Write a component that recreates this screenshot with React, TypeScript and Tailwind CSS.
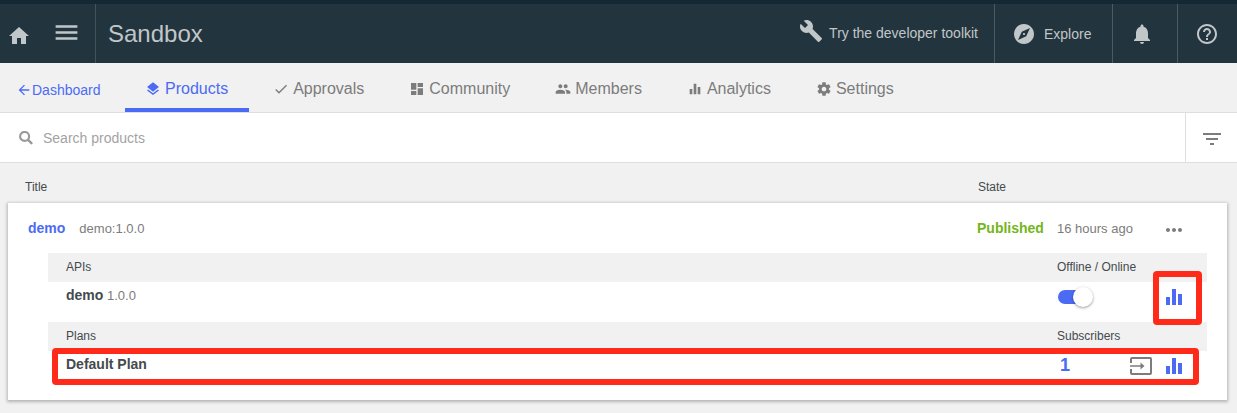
import React from "react";
import {
  MdArrowBack,
  MdBuild,
  MdCheck,
  MdDashboard,
  MdEqualizer,
  MdExplore,
  MdFilterList,
  MdHelpOutline,
  MdHome,
  MdLayers,
  MdMenu,
  MdMoreHoriz,
  MdNotifications,
} from "react-icons/md";

type IconProps = { size?: number };

function PeopleIcon({ size = 24 }: IconProps) {
  return (
    <svg viewBox="0 0 24 24" width={size} height={size} fill="currentColor" aria-hidden="true">
      <path d="M16 11c1.66 0 2.99-1.34 2.99-3S17.66 5 16 5c-1.66 0-3 1.34-3 3s1.34 3 3 3zm-8 0c1.66 0 2.99-1.34 2.99-3S9.66 5 8 5C6.34 5 5 6.34 5 8s1.34 3 3 3zm0 2c-2.33 0-7 1.17-7 3.5V19h14v-2.5c0-2.33-4.67-3.5-7-3.5zm8 0c-.29 0-.62.02-.97.05 1.16.84 1.97 1.97 1.97 3.45V19h6v-2.5c0-2.33-4.67-3.5-7-3.5z" />
    </svg>
  );
}

function GearIcon({ size = 24 }: IconProps) {
  return (
    <svg viewBox="0 0 24 24" width={size} height={size} fill="currentColor" aria-hidden="true">
      <path d="M19.43 12.98c.04-.32.07-.64.07-.98s-.03-.66-.07-.98l2.11-1.65c.19-.15.24-.42.12-.64l-2-3.46c-.12-.22-.39-.3-.61-.22l-2.49 1c-.52-.4-1.08-.73-1.69-.98l-.38-2.65C14.46 2.18 14.25 2 14 2h-4c-.25 0-.46.18-.49.42l-.38 2.65c-.61.25-1.17.59-1.69.98l-2.49-1c-.23-.09-.49 0-.61.22l-2 3.46c-.13.22-.07.49.12.64l2.11 1.65c-.04.32-.07.65-.07.98s.03.66.07.98l-2.11 1.65c-.19.15-.24.42-.12.64l2 3.46c.12.22.39.3.61.22l2.49-1c.52.4 1.08.73 1.69.98l.38 2.65c.03.24.24.42.49.42h4c.25 0 .46-.18.49-.42l.38-2.65c.61-.25 1.17-.59 1.69-.98l2.49 1c.23.09.49 0 .61-.22l2-3.46c.12-.22.07-.49-.12-.64l-2.11-1.65zM12 15.5c-1.93 0-3.5-1.57-3.5-3.5s1.57-3.5 3.5-3.5 3.5 1.57 3.5 3.5-1.57 3.5-3.5 3.5z" />
    </svg>
  );
}

function MoveInIcon() {
  return (
    <svg viewBox="0 0 24 24" width={24} height={24} fill="none" stroke="currentColor" aria-hidden="true">
      <path d="M2 9V5a1 1 0 0 1 1-1h18a1 1 0 0 1 1 1v14a1 1 0 0 1-1 1H3a1 1 0 0 1-1-1v-4" strokeWidth="2" />
      <path d="M1 12h13" strokeWidth="1.5" />
      <path d="M11.5 8.5 15.5 12l-4 3.5z" fill="currentColor" stroke="none" />
    </svg>
  );
}

function SearchIcon() {
  return (
    <svg
      viewBox="0 0 14 14"
      fill="none"
      stroke="currentColor"
      className="mr-2.5 size-3.5 text-[#999]"
      aria-hidden="true"
    >
      <circle cx="5.6" cy="5.4" r="4.5" strokeWidth="2.1" />
      <path d="M9 8.8l3.4 3.4" strokeWidth="2.4" strokeLinecap="round" />
    </svg>
  );
}

const tabs: { label: string; icon: React.ComponentType<IconProps>; active?: boolean }[] = [
  { label: "Products", icon: MdLayers, active: true },
  { label: "Approvals", icon: MdCheck },
  { label: "Community", icon: MdDashboard },
  { label: "Members", icon: PeopleIcon },
  { label: "Analytics", icon: MdEqualizer },
  { label: "Settings", icon: GearIcon },
];

function Header() {
  return (
    <header className="flex h-[63px] items-stretch border-t-4 border-[#142833] bg-[#22343e] text-[#c1c6c8]">
      <button aria-label="Home" className="flex w-[38px] items-center justify-center pt-1">
        <MdHome size={24} />
      </button>
      <button
        aria-label="Menu"
        className="flex w-[58px] items-center justify-center border-r border-[#43535c] pb-0.5"
      >
        <MdMenu size={29} />
      </button>
      <h1 className="flex items-center pl-3 text-2xl">Sandbox</h1>
      <nav className="ml-auto flex text-sm">
        <a href="#toolkit" className="flex items-center pr-4 pb-0.5">
          <MdBuild size={24} className="mr-1.5 mb-1" />
          Try the developer toolkit
        </a>
        <a
          href="#explore"
          className="flex w-[118px] items-center gap-2 border-l border-[#4b5b64] pl-[17px]"
        >
          <MdExplore size={24} />
          Explore
        </a>
        <button
          aria-label="Notifications"
          className="flex w-[65px] items-center border-l border-[#4b5b64] pl-[17px]"
        >
          <MdNotifications size={24} />
        </button>
        <button
          aria-label="Help"
          className="flex w-[60px] items-center border-l border-[#4b5b64] pl-[17px]"
        >
          <MdHelpOutline size={24} />
        </button>
      </nav>
    </header>
  );
}

function Tabs() {
  return (
    <nav className="flex h-[50px] border-b border-[#dedede] text-[#7c7c7c]">
      <a
        href="#dashboard"
        className="flex w-[125px] items-center pt-1 pl-4 text-sm text-[#4b6bf5]"
      >
        <MdArrowBack size={16} />
        Dashboard
      </a>
      <div className="flex gap-1">
        {tabs.map(({ label, icon: Icon, active }) => (
          <a
            key={label}
            href={"#" + label.toLowerCase()}
            className={
              active
                ? "flex items-center gap-1 border-b-4 border-[#4b6bf5] pt-1.5 pr-[21px] pl-5 text-base text-[#4b6bf5]"
                : "flex items-center gap-1 border-b-4 border-transparent pt-1.5 pr-[21px] pl-5 text-base"
            }
          >
            <Icon size={16} />
            {label}
          </a>
        ))}
      </div>
    </nav>
  );
}

function SearchBar() {
  return (
    <div className="flex h-[50px] border-b border-[#dedede] bg-white">
      <label className="flex flex-1 items-center pl-[19px]">
        <SearchIcon />
        <input
          type="search"
          aria-label="Search products"
          placeholder="Search products"
          className="flex-1 text-sm outline-none placeholder:text-[#a3a3a3]"
        />
      </label>
      <button
        aria-label="Filter"
        className="flex w-[52px] items-center border-l border-[#dedede] pt-0.5 pl-3.5 text-[#7c7c7c]"
      >
        <MdFilterList size={24} />
      </button>
    </div>
  );
}

function Section({
  title,
  status,
  highlight,
  children,
}: {
  title: string;
  status: string;
  highlight: string;
  children: React.ReactNode;
}) {
  return (
    <div className="relative mr-5 ml-10">
      <table className="w-full table-fixed text-left">
        <colgroup>
          <col />
          <col className="w-[72px]" />
          <col className="w-[33px]" />
          <col className="w-[45px]" />
        </colgroup>
        <thead>
          <tr className="h-[29px] bg-[#f1f1f1] text-xs">
            <th className="pb-0.5 pl-[18px] font-normal">{title}</th>
            <th colSpan={3} className="pb-0.5 font-normal">
              {status}
            </th>
          </tr>
        </thead>
        <tbody>
          <tr className="h-[29px]">{children}</tr>
        </tbody>
      </table>
      <div className={highlight} />
    </div>
  );
}

function AnalyticsButton({ label }: { label: string }) {
  return (
    <button aria-label={label} className="block text-[#4b6bf5]">
      <MdEqualizer size={24} />
    </button>
  );
}

function ProductCard() {
  return (
    <section className="mr-2.5 ml-2 bg-white pb-5 shadow-[0_1px_3px_1px_rgba(0,0,0,0.25)]">
      <div className="flex h-[50px] items-center pl-5">
        <a href="#demo" className="text-sm font-bold text-[#4b6bf5]">
          demo
        </a>
        <span className="ml-3.5 pt-0.5 text-[13px] text-[#7c7c7c]">demo:1.0.0</span>
        <div className="ml-auto flex w-[250px] items-center">
          <span className="w-20 text-sm font-bold text-[#74b51c]">Published</span>
          <span className="w-[105px] pt-0.5 text-[13px] text-[#7c7c7c]">16 hours ago</span>
          <button aria-label="More actions" className="pt-1 text-[#7c7c7c]">
            <MdMoreHoriz size={24} />
          </button>
        </div>
      </div>
      <div className="flex flex-col gap-[11px]">
        <Section
          title="APIs"
          status="Offline / Online"
          highlight="pointer-events-none absolute top-[18px] right-[5px] z-10 h-[54px] w-[49px] rounded-sm border-6 border-[#ff2a1a]"
        >
          <td className="pb-0.5 pl-[18px] text-[13px] text-[#7c7c7c]">
            <span className="text-sm font-bold text-[#444a4d]">demo</span> 1.0.0
          </td>
          <td colSpan={2}>
            <label className="flex items-center">
              <input
                type="checkbox"
                role="switch"
                defaultChecked
                aria-label="Online"
                className="ml-px flex h-3.5 w-[35px] appearance-none items-center justify-start rounded-full bg-[linear-gradient(to_right,#4b6bf5_28px,transparent_28px)] before:block before:size-5 before:shrink-0 before:rounded-full before:bg-white before:shadow-[0_1px_3px_rgba(0,0,0,0.4)] checked:justify-end"
              />
            </label>
          </td>
          <td>
            <AnalyticsButton label="API analytics" />
          </td>
        </Section>
        <Section
          title="Plans"
          status="Subscribers"
          highlight="pointer-events-none absolute top-[26px] right-2 left-1 z-10 h-[37px] rounded-sm border-6 border-[#ff2a1a]"
        >
          <td className="pb-1 pl-[18px] text-sm font-bold text-[#444a4d]">Default Plan</td>
          <td className="pb-0.5 pl-[3px] text-lg leading-6 font-bold">
            <a href="#subscribers" className="text-[#4b6bf5]">
              1
            </a>
          </td>
          <td>
            <button aria-label="Move subscribers" className="block text-[#7c7c7c]">
              <MoveInIcon />
            </button>
          </td>
          <td>
            <AnalyticsButton label="Plan analytics" />
          </td>
        </Section>
      </div>
    </section>
  );
}

export default function App() {
  return (
    <div className="min-h-screen bg-[#f1f1f1] font-['Liberation_Sans',Arial,sans-serif] text-[#444a4d]">
      <Header />
      <Tabs />
      <SearchBar />
      <main>
        <div className="flex h-10 items-center pt-2 pl-[25px] text-xs">
          <span>Title</span>
          <span className="ml-auto w-[259px]">State</span>
        </div>
        <ProductCard />
      </main>
    </div>
  );
}
